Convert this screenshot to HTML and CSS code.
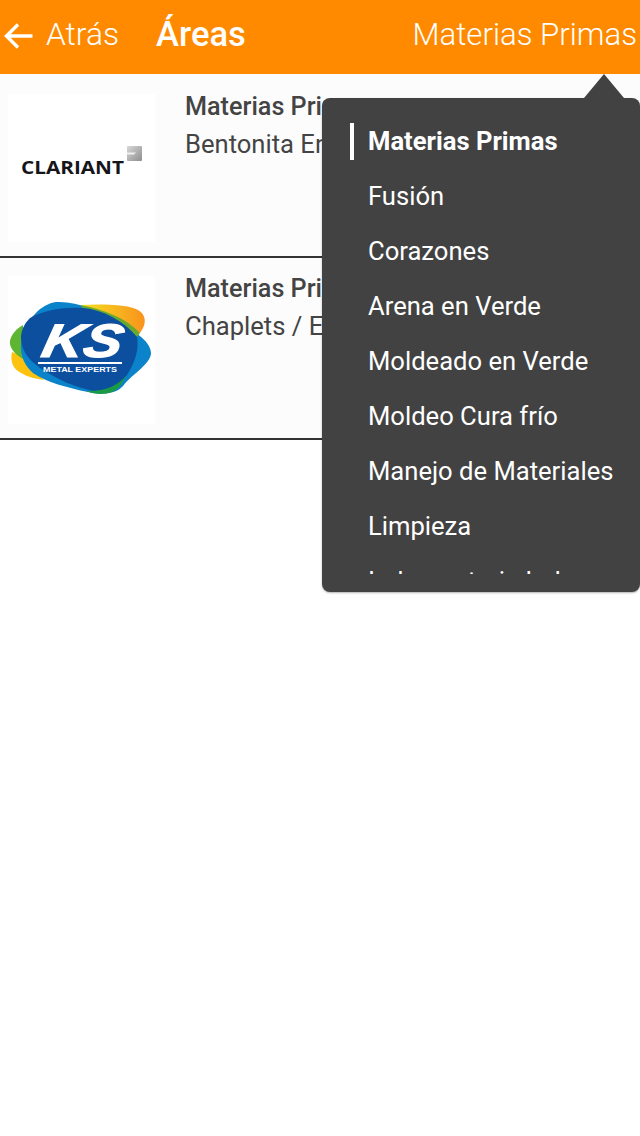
FILE: index.html
```html
<!DOCTYPE html>
<html lang="en">
<head>
  <meta charset="UTF-8" />
  <title>Áreas</title>
  <link rel="stylesheet" href="styles.css">
</head>
<body>

  <!-- Header -->
  <header class="header">
    <a class="back">
      <svg class="back-icon" viewBox="0 0 30 28" width="30" height="28">
        <path d="M28.5 14H3M14 2.5 2.5 14 14 25.5" fill="none" stroke="#fff" stroke-width="3.4"/>
      </svg>
      <span>Atrás</span>
    </a>
    <h1 class="title">Áreas</h1>
    <div class="area-name">Materias Primas</div>
  </header>

  <!-- Supplier list -->
  <div class="list">
    <div class="row">
      <div class="logo">
        <svg viewBox="0 0 148 148" width="148" height="148">
          <defs>
            <linearGradient id="cube" x1="0" y1="0" x2="1" y2="1">
              <stop offset="0" stop-color="#d8d8d8"/>
              <stop offset="1" stop-color="#8e8e8e"/>
            </linearGradient>
          </defs>
          <text class="clariant" x="13" y="80" textLength="103" lengthAdjust="spacingAndGlyphs">CLARIANT</text>
          <rect x="119" y="52" width="15" height="15" rx="1" fill="url(#cube)"/>
          <path d="M119 58.5h9l-2 2h-7z" fill="#efefef"/>
        </svg>
      </div>
      <div class="row-text">
        <div class="row-title">Materias Primas</div>
        <div class="row-sub">Bentonita En</div>
      </div>
    </div>

    <div class="row">
      <div class="logo">
        <svg viewBox="0 0 148 148" width="148" height="148">
          <defs>
            <linearGradient id="sun" x1="0" y1="0" x2="1" y2="0">
              <stop offset="0" stop-color="#f5e020"/>
              <stop offset="1" stop-color="#f9931d"/>
            </linearGradient>
          </defs>
          <path d="M72 29C92 28 115 28 128 33 139 38 139 48 132 57L110 42Z" fill="url(#sun)"/>
          <path d="M4 76C2 86 5 93 13 97 20 101 28 103 36 104L28 96 14 80Z" fill="#fbc30f"/>
          <path d="M15 49C6 54 1 62 2 68 3 74 8 79 15 83Z" fill="#5db531"/>
          <path d="M48 26C70 25 92 35 112 47 128 56 143 66 143 77 143 88 124 98 115 110 108 118 95 119 80 116 60 112 38 106 25 97 17 90 12 80 13 68 13 55 20 45 27 38 33 31 41 27 48 26Z" fill="#0a83cb"/>
          <path d="M72 29C95 33 118 42 132 57L129 61C115 46 95 35 75 32Z" fill="#69a92e"/>
          <path d="M13 60C14 52 17 47 22 42 38 33 58 31 75 32 95 34 115 44 129 61 131 72 128 85 119 99 111 110 100 115 85 115 76 113 68 110 59 107 50 103 42 98 35 94 24 86 13 78 13 60Z" fill="#0c4f9f"/>
          <path d="M78 115C90 120 105 119 112 110L119 99C110 110 95 116 78 115Z" fill="#1b9a46"/>
          <text class="ks" x="49" y="81" textLength="80" transform="skewX(-12)" lengthAdjust="spacingAndGlyphs">KS</text>
          <rect x="30" y="86" width="84" height="2" fill="#fff"/>
          <text class="ks-sub" x="35" y="95.5" textLength="74" lengthAdjust="spacingAndGlyphs">METAL EXPERTS</text>
        </svg>
      </div>
      <div class="row-text">
        <div class="row-title">Materias Primas</div>
        <div class="row-sub">Chaplets / E</div>
      </div>
    </div>
  </div>

  <!-- Area dropdown -->
  <div class="menu">
    <ul class="menu-list">
      <li class="menu-item active"><span>Materias Primas</span></li>
      <li class="menu-item"><span>Fusión</span></li>
      <li class="menu-item"><span>Corazones</span></li>
      <li class="menu-item"><span>Arena en Verde</span></li>
      <li class="menu-item"><span>Moldeado en Verde</span></li>
      <li class="menu-item"><span>Moldeo Cura frío</span></li>
      <li class="menu-item"><span>Manejo de Materiales</span></li>
      <li class="menu-item"><span>Limpieza</span></li>
      <li class="menu-item"><span>Indumentaria Ind</span></li>
    </ul>
  </div>

</body>
</html>
```

FILE: styles.css
```css
body {
  font-family: Roboto, "Liberation Sans", sans-serif;
  margin: 0;
  background-color: #fff;
}

/* Header */
.header {
  display: flex;
  align-items: center;
  height: 74px;
  padding: 0 3px 6px 4px;
  box-sizing: border-box;
  background-color: #ff8a00;
  color: #fff;
}
.back {
  display: flex;
  align-items: center;
  gap: 12px;
  font-size: 31.8px;
  font-weight: 300;
}
.back-icon {
  flex: none;
  margin-top: 4px;
}
.title {
  margin: 0 0 0 37px;
  font-size: 34.6px;
  font-weight: 500;
}
.area-name {
  margin-left: auto;
  font-size: 31.2px;
  font-weight: 300;
}

/* Supplier list */
.list {
  padding-top: 2px;
  background-color: #fcfcfc;
}
.row {
  display: flex;
  height: 180px;
  padding-left: 8px;
  border-bottom: 2px solid #333;
  background-color: #fcfcfc;
}
.logo {
  flex: none;
  width: 147px;
  height: 148px;
  margin-top: 18px;
  background-color: #fff;
  overflow: hidden;
}
.row-text {
  margin: 14px 0 0 30px;
  color: #444;
}
.row-title {
  font-size: 25.2px;
  font-weight: 500;
  line-height: 34px;
}
.row-sub {
  font-size: 25.6px;
  line-height: 40px;
}

/* Logos */
.clariant {
  font-family: "Open Sans", sans-serif;
  font-size: 18px;
  font-weight: 700;
  fill: #15151a;
}
.ks {
  font-family: "Liberation Sans", sans-serif;
  font-size: 47px;
  font-weight: 700;
  font-style: italic;
  fill: #fff;
  stroke: #fff;
  stroke-width: 1.2;
}
.ks-sub {
  font-family: "Liberation Sans", sans-serif;
  font-size: 6.4px;
  font-weight: 700;
  fill: #fff;
}

/* Dropdown */
.menu {
  position: absolute;
  top: 98px;
  left: 322px;
  width: 318px;
  height: 494px;
  padding: 16px 0 18px 28px;
  box-sizing: border-box;
  background-color: #424242;
  border-radius: 8px;
  box-shadow: 0 1px 2px rgba(0,0,0,0.3);
}
.menu::before {
  content: "";
  position: absolute;
  top: -24px;
  right: 16px;
  border-left: 20px solid transparent;
  border-right: 20px solid transparent;
  border-bottom: 24px solid #424242;
}
.menu-list {
  height: 460px;
  margin: 0;
  padding: 0;
  list-style: none;
  overflow: hidden;
}
.menu-item {
  display: flex;
  align-items: center;
  height: 55px;
  color: #fff;
  font-size: 25.6px;
  white-space: nowrap;
}
.menu-item span {
  padding-left: 14px;
  border-left: 4px solid transparent;
  line-height: 37px;
}
.menu-item.active {
  font-weight: 700;
}
.menu-item.active span {
  border-left-color: #fff;
}
```
